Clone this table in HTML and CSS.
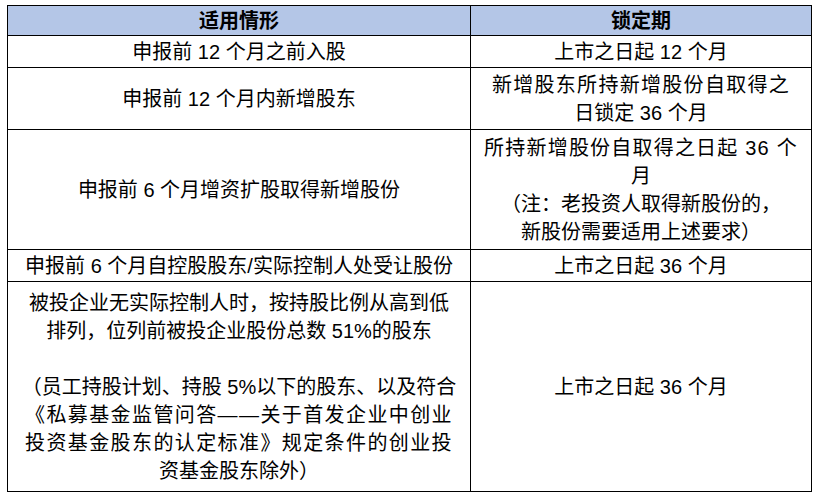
FILE: index.html
```html
<!DOCTYPE html>
<html lang="zh-CN">
<head>
<meta charset="utf-8">
<title>锁定期</title>
<link rel="stylesheet" href="styles.css">
</head>
<body>
<table class="lock-table">
  <colgroup>
    <col class="col-case">
    <col class="col-period">
  </colgroup>
  <thead>
    <tr class="row-head">
      <th>适用情形</th>
      <th>锁定期</th>
    </tr>
  </thead>
  <tbody>
    <tr class="row-1">
      <td>申报前 12 个月之前入股</td>
      <td>上市之日起 12 个月</td>
    </tr>
    <tr class="row-2">
      <td>申报前 12 个月内新增股东</td>
      <td><span class="line spread-s">新增股东所持新增股份自取得之</span><span class="line">日锁定 36 个月</span></td>
    </tr>
    <tr class="row-3">
      <td>申报前 6 个月增资扩股取得新增股份</td>
      <td><span class="line spread-m">所持新增股份自取得之日起 36 个</span><span class="line">月</span><span class="line">（注：老投资人取得新股份的，</span><span class="line">新股份需要适用上述要求）</span></td>
    </tr>
    <tr class="row-4">
      <td>申报前 6 个月自控股股东/实际控制人处受让股份</td>
      <td>上市之日起 36 个月</td>
    </tr>
    <tr class="row-5">
      <td><span class="line">被投企业无实际控制人时，按持股比例从高到低</span><span class="line">排列，位列前被投企业股份总数 51%的股东</span><span class="line blank">&nbsp;</span><span class="line">（员工持股计划、持股 5%以下的股东、以及符合</span><span class="line spread-l">《私募基金监管问答——关于首发企业中创业</span><span class="line spread-l">投资基金股东的认定标准》规定条件的创业投</span><span class="line">资基金股东除外）</span></td>
      <td>上市之日起 36 个月</td>
    </tr>
  </tbody>
</table>
</body>
</html>
```

FILE: styles.css
```css
html, body {
  margin: 0;
  padding: 0;
  background: #ffffff;
}

body {
  padding: 5px 0 0 7px;
  font-family: "Liberation Sans", "Noto Sans CJK SC", sans-serif;
  color: #000000;
}

.lock-table {
  border-collapse: collapse;
  width: 804px;
  table-layout: fixed;
  font-size: 20px;
  line-height: 28px;
}

.col-case {
  width: 463px;
}

.col-period {
  width: 341px;
}

.lock-table th,
.lock-table td {
  border: 1px solid #000000;
  padding: 0 4px;
  text-align: center;
  vertical-align: middle;
  white-space: nowrap;
}

.lock-table th {
  background: #b4c6e7;
  font-weight: bold;
}

.row-head th { height: 29px; }
.row-1 td { height: 31px; }
.row-2 td { height: 61px; }
.row-3 td { height: 119px; }
.row-4 td { height: 31px; }
.row-5 td { height: 209px; }

.line {
  display: block;
}

.spread-s {
  letter-spacing: 1.3px;
}

.spread-m {
  letter-spacing: 1.2px;
}

.spread-l {
  letter-spacing: 1.4px;
}
```
